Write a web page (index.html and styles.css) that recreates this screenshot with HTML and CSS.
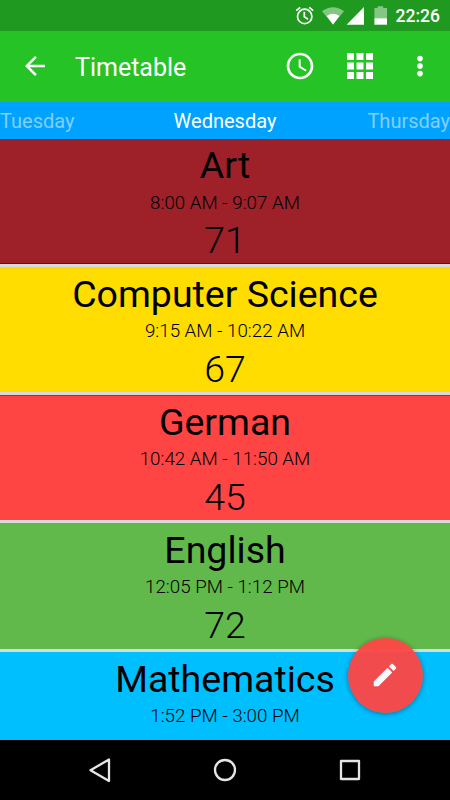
FILE: index.html
```
<!DOCTYPE html>
<html lang="en">
<head>
<meta charset="utf-8">
<title>Timetable</title>
<link rel="stylesheet" href="styles.css">
</head>
<body>
<div class="screen">
  <header class="status">
    <svg class="status-icons" width="110" height="31" viewBox="0 0 110 31" fill="#fff">
      <g fill="none" stroke="#fff" stroke-width="1.7"><circle cx="9.700" cy="16.400" r="7.200"/><path d="M9.300 11.800v5l3.800 2.400M1.200 10.600l4-3.300M18.200 10.600l-4-3.300"/></g>
      <path opacity=".45" d="M27 11.200Q38 3.200 49 11.200L38 24.500z"/>
      <path d="M31.600 16Q38 11.600 44.400 16L38 24.500z"/>
      <path d="M69 7v17.700H51.600z"/>
      <path opacity=".45" d="M79.400 8h3.200V6.200h5.600V8h3.800v10.200H79.400z"/>
      <path d="M79.400 18.200H92v6.500H79.400z"/>
    </svg>
    <span class="clock">22:26</span>
  </header>
  <nav class="appbar">
    <svg class="back" width="30" height="30" viewBox="0 0 24 24" fill="#fff"><path d="M20 11H7.830l5.590-5.590L12 4l-8 8 8 8 1.410-1.410L7.830 13H20v-2z"/></svg>
    <h1 class="title">Timetable</h1>
    <svg class="action" width="32" height="32" viewBox="0 0 24 24" fill="#fff"><path d="M11.990 2C6.470 2 2 6.480 2 12s4.470 10 9.990 10C17.520 22 22 17.520 22 12S17.520 2 11.990 2zM12 20c-4.420 0-8-3.580-8-8s3.580-8 8-8 8 3.580 8 8-3.580 8-8 8zm.5-13H11v6l5.250 3.150.75-1.230-4.500-2.670z"/></svg>
    <svg class="action grid" width="26" height="26" viewBox="0 0 26 26" fill="#fff"><path d="M0 0h7v7H0zM9.500 0h7v7h-7zM19 0h7v7h-7zM0 9.500h7v7H0zM9.500 9.500h7v7h-7zM19 9.500h7v7h-7zM0 19h7v7H0zM9.500 19h7v7h-7zM19 19h7v7h-7z"/></svg>
    <svg class="action more" width="30" height="30" viewBox="0 0 30 30" fill="#fff"><circle cx="15" cy="7.600" r="2.800"/><circle cx="15" cy="15.100" r="2.800"/><circle cx="15" cy="22.600" r="2.800"/></svg>
  </nav>
  <div class="days"><span>Tuesday</span><span class="current">Wednesday</span><span>Thursday</span></div>
  <main class="lessons">
    <section class="lesson art"><h2>Art</h2><p class="time">8:00 AM - 9:07 AM</p><p class="room">71</p></section>
    <section class="lesson cs"><h2>Computer Science</h2><p class="time">9:15 AM - 10:22 AM</p><p class="room">67</p></section>
    <section class="lesson german"><h2>German</h2><p class="time">10:42 AM - 11:50 AM</p><p class="room">45</p></section>
    <section class="lesson english"><h2>English</h2><p class="time">12:05 PM - 1:12 PM</p><p class="room">72</p></section>
    <section class="lesson maths"><h2>Mathematics</h2><p class="time">1:52 PM - 3:00 PM</p></section>
  </main>
  <button class="fab" aria-label="Edit"><svg width="30" height="30" viewBox="0 0 24 24" fill="#f2fcff"><path d="M3 17.250V21h3.750L17.810 9.940l-3.750-3.750L3 17.250zM20.710 7.040c.39-.39.39-1.020 0-1.410l-2.340-2.340c-.39-.39-1.020-.39-1.410 0l-1.830 1.830 3.750 3.750 1.830-1.830z"/></svg></button>
  <footer class="navbar">
    <svg width="30" height="30" viewBox="0 0 30 30"><path d="M24 4.500v21.500L5.500 15.200z"/></svg>
    <svg width="30" height="30" viewBox="0 0 30 30"><circle cx="15" cy="15" r="10"/></svg>
    <svg width="30" height="30" viewBox="0 0 30 30"><rect x="6" y="6" width="18" height="18"/></svg>
  </footer>
</div>
</body>
</html>
```
FILE: styles.css
```
* { box-sizing: border-box; }
body { margin: 0; font-family: Roboto, sans-serif; }
h1, h2, p { margin: 0; font-weight: 400; }
svg { display: block; flex: none; }
.screen { position: relative; width: 450px; height: 800px; overflow: hidden; display: flex; flex-direction: column; }
.status { flex: none; height: 31px; background: #1f991f; display: flex; justify-content: flex-end; align-items: center; padding-right: 10px; color: #fff; }
.status-icons { margin-right: -9px; }
.clock { font-size: 17.500px; font-weight: 500; line-height: 31px; padding-top: 2px; }
.appbar { flex: none; height: 70.500px; background: #26c326; display: flex; align-items: center; padding-left: 20px; }
.title { flex: 1; margin-left: 25px; font-size: 25px; line-height: 30px; color: #fff; padding-top: 3px; }
.grid { margin: 0 32px 0 31px; }
.more { margin-right: 15px; }
.days { flex: none; height: 37px; background: #00a2ff; display: grid; grid-template-columns: 1fr auto 1fr; font-size: 20px; line-height: 39px; color: rgba(255, 255, 255, .5); }
.days span:last-child { text-align: right; }
.days .current { color: #fff; }
.lessons { flex: 1; min-height: 0; overflow: hidden; background: #dadada; display: flex; flex-direction: column; gap: 3px; }
.lesson { flex: none; height: 125.300px; padding-top: 4.900px; text-align: center; color: #000; }
.lesson h2 { font-size: 37.500px; line-height: 44px; }
.time { margin-top: 4.200px; font-size: 18.750px; line-height: 22px; font-weight: 300; }
.room { margin-top: 4.800px; font-size: 37.500px; line-height: 44px; font-weight: 300; }
.art { background: #9e2129; border-bottom: 1px solid #8b0000; padding-top: 4.500px; }
.art .time { margin-top: 4.600px; }
.cs { background: #ffdd00; }
.german { background: #ff4444; border-top: 1px solid #ff0505; padding-top: 3.500px; }
.english { background: #61b94b; padding-top: 4.500px; }
.maths { background: #00bfff; }
.fab { position: absolute; left: 347.500px; top: 637.500px; width: 75px; height: 75px; padding: 0; border: 0; border-radius: 50%; background: rgba(255, 68, 68, .95); box-shadow: 0 1px 5px rgba(0, 0, 0, .4); display: flex; align-items: center; justify-content: center; }
.navbar { flex: none; height: 60px; background: #000; display: flex; justify-content: space-between; align-items: center; padding: 0 85px; }
.navbar svg { fill: none; stroke: #e6e6e6; stroke-width: 2.300; stroke-linejoin: round; }
```
